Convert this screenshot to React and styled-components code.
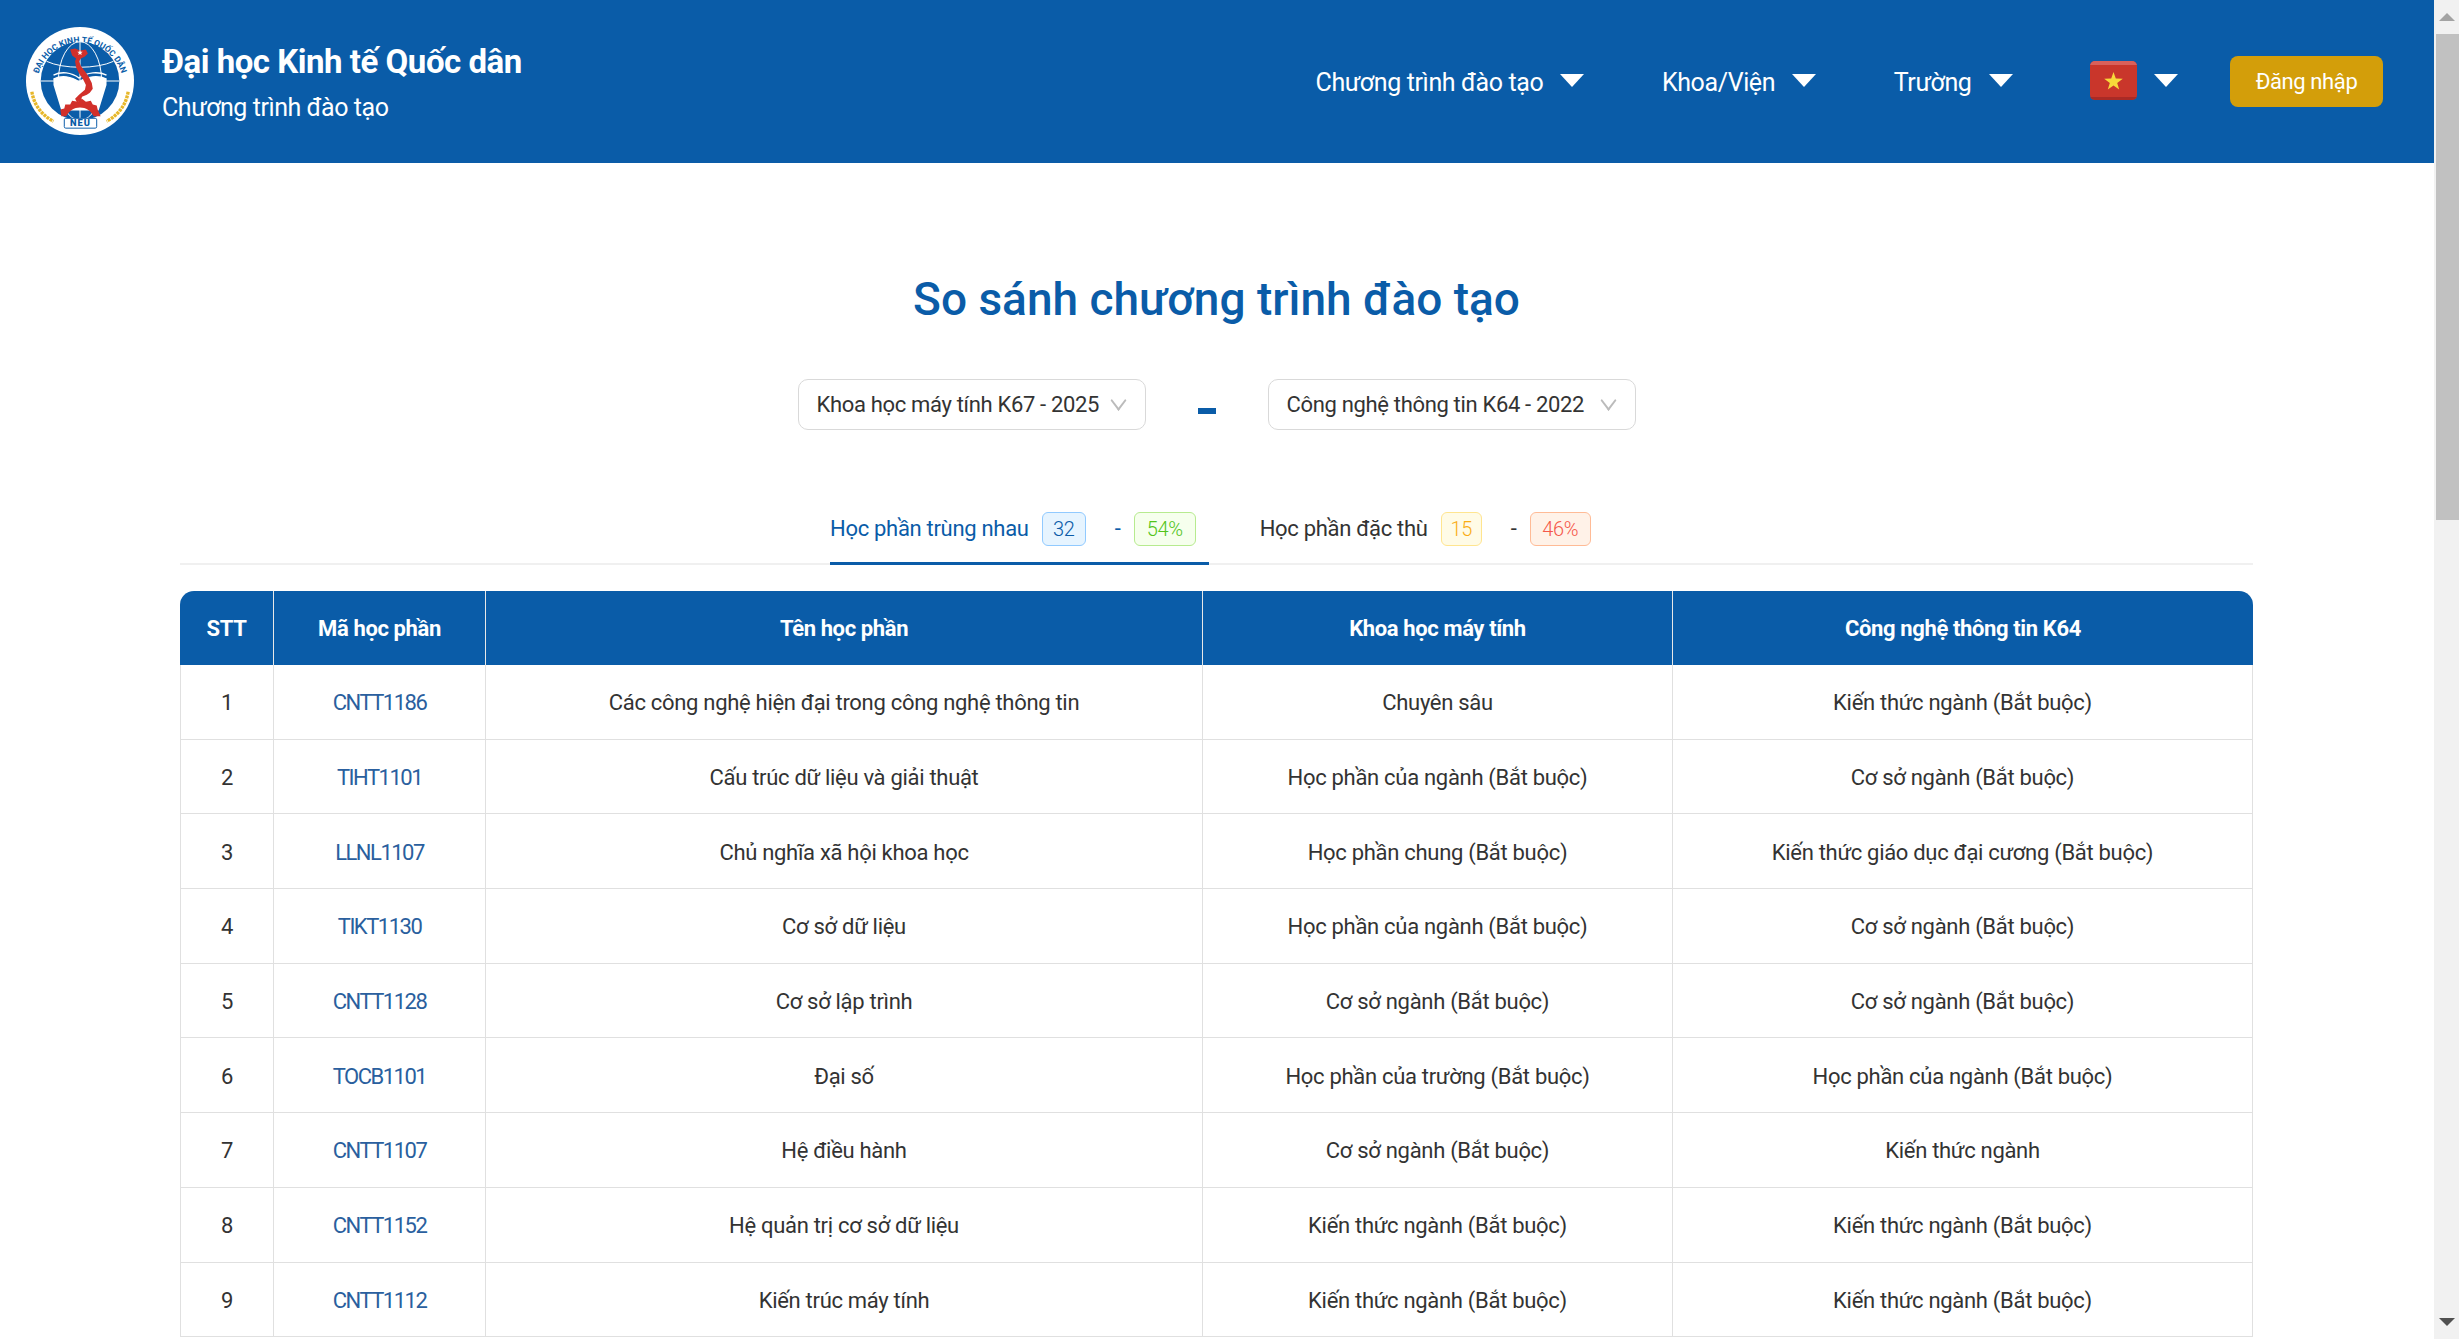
import React from 'react'
import styled, { createGlobalStyle } from 'styled-components'

const GlobalStyle = createGlobalStyle`
  html, body { margin: 0; padding: 0; height: 100%; background: #fff; }
  body { font-family: Roboto, "Liberation Sans", sans-serif; color: #333; }
  * { box-sizing: border-box; }
`

const rows = [
  ['1', 'CNTT1186', 'Các công nghệ hiện đại trong công nghệ thông tin', 'Chuyên sâu', 'Kiến thức ngành (Bắt buộc)'],
  ['2', 'TIHT1101', 'Cấu trúc dữ liệu và giải thuật', 'Học phần của ngành (Bắt buộc)', 'Cơ sở ngành (Bắt buộc)'],
  ['3', 'LLNL1107', 'Chủ nghĩa xã hội khoa học', 'Học phần chung (Bắt buộc)', 'Kiến thức giáo dục đại cương (Bắt buộc)'],
  ['4', 'TIKT1130', 'Cơ sở dữ liệu', 'Học phần của ngành (Bắt buộc)', 'Cơ sở ngành (Bắt buộc)'],
  ['5', 'CNTT1128', 'Cơ sở lập trình', 'Cơ sở ngành (Bắt buộc)', 'Cơ sở ngành (Bắt buộc)'],
  ['6', 'TOCB1101', 'Đại số', 'Học phần của trường (Bắt buộc)', 'Học phần của ngành (Bắt buộc)'],
  ['7', 'CNTT1107', 'Hệ điều hành', 'Cơ sở ngành (Bắt buộc)', 'Kiến thức ngành'],
  ['8', 'CNTT1152', 'Hệ quản trị cơ sở dữ liệu', 'Kiến thức ngành (Bắt buộc)', 'Kiến thức ngành (Bắt buộc)'],
  ['9', 'CNTT1112', 'Kiến trúc máy tính', 'Kiến thức ngành (Bắt buộc)', 'Kiến thức ngành (Bắt buộc)'],
]

const Logo = () => (
  <LogoSvg viewBox="9 12 112 112">
    <defs>
      <path id="logoArc" d="M21 73 A44 44 0 1 1 109 73" />
    </defs>
    <circle cx="65" cy="68" r="55" fill="#fff" />
    <text fontFamily="Roboto, sans-serif" fontSize="8.6" fontWeight="700" fill="#0a5ca8">
      <textPath href="#logoArc" startOffset="50%" textAnchor="middle">ĐẠI HỌC KINH TẾ QUỐC DÂN</textPath>
    </text>
    <circle cx="65" cy="68" r="40" fill="#0a5ca8" />
    <g fill="none" stroke="#fff" strokeWidth="1">
      <ellipse cx="65" cy="68" rx="22" ry="40" />
      <path d="M25 68H105M65 28V108M31 48C48 56 82 56 99 48" />
    </g>
    <path d="M38 66C46 62 56 63 64 69C72 63 84 62 92 66V72L84 98H46L38 72Z" fill="#fff" />
    <path d="M38 62C46 58 56 59 64 65C72 59 84 58 92 62M38 66C46 62 56 63 64 69C72 63 84 62 92 66" fill="none" stroke="#fff" strokeWidth="1.4" />
    <path d="M55 36L60 35L65 37L71 36L73 40L70 43L66 45L64 48L66 53L70 58L74 64L77 70L78 76L75 80L72 82L67 84L66 88L62 90L60 86L64 82L70 77L71 72L68 66L64 60L61 54L60 48L61 45L57 42Z" fill="#d2302a" />
    <path d="M65 36.2l.8 1.9 2 .1-1.6 1.3.5 2-1.7-1.1-1.7 1.1.5-2-1.6-1.3 2-.1z" fill="#fff" />
    <path d="M46 104L45 97L49 96L50 92L55 92L57 88L63 89L67 86L71 89L76 88L78 92L82 93L83 97L86 104H79C76 98 71 95 65 95C59 95 54 98 51 104Z" fill="#d2302a" />
    <g fill="none" stroke="#e7b72a" strokeWidth="3.4" strokeDasharray="3 0.8">
      <path d="M16 79C18 92 26 103 38 109" />
      <path d="M114 79C112 92 104 103 92 109" />
    </g>
    <rect x="49" y="106" width="33" height="10" rx="1.5" fill="#fff" stroke="#0a5ca8" strokeWidth="1" />
    <text x="65.5" y="114.3" textAnchor="middle" fontFamily="Roboto, sans-serif" fontSize="9.5" fontWeight="900" fill="#0a5ca8" letterSpacing="1">NEU</text>
  </LogoSvg>
)

const App = () => {
  return (
    <>
      <GlobalStyle />
      <Page>
        <Main>
          <Header>
            <Logo />
            <Brand>
              <BrandTitle>Đại học Kinh tế Quốc dân</BrandTitle>
              <BrandSub>Chương trình đào tạo</BrandSub>
            </Brand>
            <Nav>
              <NavItem>Chương trình đào tạo<Caret /></NavItem>
              <NavItem>Khoa/Viện<Caret /></NavItem>
              <NavItem>Trường<Caret /></NavItem>
              <NavItem>
                <Flag viewBox="0 0 47 39">
                  <rect width="47" height="39" fill="#c9362b" />
                  <rect width="47" height="4" fill="#d9605a" />
                  <rect y="36" width="47" height="3" fill="#a92a25" />
                  <path d="M23.5 11l2.3 6.6 7 .1-5.6 4.2 2 6.7-5.7-4-5.7 4 2-6.7-5.6-4.2 7-.1z" fill="#f7d93a" />
                </Flag>
                <Caret />
              </NavItem>
            </Nav>
            <LoginButton>Đăng nhập</LoginButton>
          </Header>
          <Content>
            <Title>So sánh chương trình đào tạo</Title>
            <Selectors>
              <SelectBox $width={348}>Khoa học máy tính K67 - 2025<Chevron /></SelectBox>
              <Dash />
              <SelectBox $width={368}>Công nghệ thông tin K64 - 2022<Chevron /></SelectBox>
            </Selectors>
            <Tabs>
              <Tab $active>
                Học phần trùng nhau
                <Badge $tone="blue" $width={44}>32</Badge>
                <TabSep>-</TabSep>
                <Badge $tone="green" $width={62}>54%</Badge>
              </Tab>
              <Tab>
                Học phần đặc thù
                <Badge $tone="gold" $width={41}>15</Badge>
                <TabSep>-</TabSep>
                <Badge $tone="red" $width={61}>46%</Badge>
              </Tab>
            </Tabs>
            <Table>
              <colgroup>
                <col style={{ width: 94 }} />
                <col style={{ width: 212 }} />
                <col style={{ width: 717 }} />
                <col style={{ width: 470 }} />
                <col />
              </colgroup>
              <thead>
                <tr>
                  <Th>STT</Th>
                  <Th>Mã học phần</Th>
                  <Th>Tên học phần</Th>
                  <Th>Khoa học máy tính</Th>
                  <Th>Công nghệ thông tin K64</Th>
                </tr>
              </thead>
              <tbody>
                {rows.map((r) => (
                  <tr key={r[0]}>
                    <Td>{r[0]}</Td>
                    <Td><CodeLink>{r[1]}</CodeLink></Td>
                    <Td>{r[2]}</Td>
                    <Td>{r[3]}</Td>
                    <Td>{r[4]}</Td>
                  </tr>
                ))}
              </tbody>
            </Table>
          </Content>
        </Main>
        <ScrollBar>
          <ScrollBtn><ArrowUp /></ScrollBtn>
          <ScrollThumb />
          <ScrollBtn $end><ArrowDown /></ScrollBtn>
        </ScrollBar>
      </Page>
    </>
  )
}

export default App

const Page = styled.div`
display: flex;
height: 100vh;
overflow: hidden;
`
const Main = styled.div`
flex: 1;
min-width: 0;
overflow: hidden;
`
const Header = styled.div`
height: 163px;
display: flex;
align-items: center;
padding: 0 51px 0 25px;
background: #0a5ca8;
color: #fff;
`
const LogoSvg = styled.svg`
width: 110px;
height: 110px;
margin-top: -1px;
flex-shrink: 0;
`
const Brand = styled.div`
margin-left: 27px;
display: flex;
flex-direction: column;
gap: 12px;
margin-top: 2px;
`
const BrandTitle = styled.div`
font-size: 33px;
font-weight: 700;
line-height: 38px;
letter-spacing: -0.47px;
`
const BrandSub = styled.div`
font-size: 25px;
line-height: 30px;
letter-spacing: -0.45px;
`
const Nav = styled.div`
margin-left: auto;
display: flex;
align-items: center;
gap: 77.5px;
`
const NavItem = styled.div`
display: flex;
align-items: center;
gap: 17px;
font-size: 25px;
line-height: 32px;
letter-spacing: -0.38px;
padding-top: 3px;
`
const Caret = styled.span`
width: 0;
height: 0;
margin-top: -6px;
border-left: 12px solid transparent;
border-right: 12px solid transparent;
border-top: 13px solid #fff;
`
const Flag = styled.svg`
width: 47px;
height: 39px;
border-radius: 5px;
margin-top: -5px;
`
const LoginButton = styled.div`
margin-left: 52px;
width: 153px;
height: 51px;
display: flex;
align-items: center;
justify-content: center;
border-radius: 8px;
background: #d39e0a;
font-size: 22px;
letter-spacing: -0.4px;
`
const Content = styled.div`
width: 2073px;
margin: 0 auto 0 180px;
`
const Title = styled.h1`
margin: 0;
padding-top: 108px;
height: 216px;
text-align: center;
font-size: 46px;
line-height: 56px;
font-weight: 500;
color: #0a5ca8;
letter-spacing: 0;
`
const Selectors = styled.div`
display: flex;
align-items: center;
justify-content: center;
gap: 52px;
`
const SelectBox = styled.div`
width: ${(p) => p.$width}px;
height: 51px;
display: flex;
align-items: center;
justify-content: space-between;
padding: 0 18px;
border: 1px solid #d9d9d9;
border-radius: 10px;
font-size: 22px;
letter-spacing: -0.33px;
color: #333;
`
const Chevron = styled.span`
width: 13px;
height: 13px;
margin: -8px 2px 0 0;
border-right: 2px solid #bbb;
border-bottom: 2px solid #bbb;
transform: rotate(45deg) skew(8deg, 8deg);
`
const Dash = styled.span`
width: 18px;
height: 6px;
margin-top: 12px;
background: #0a5ca8;
`
const Tabs = styled.div`
display: flex;
justify-content: flex-start;
gap: 51px;
margin-top: 62px;
padding-left: 650px;
border-bottom: 2px solid #f0f0f0;
height: 73px;
`
const Tab = styled.div`
height: 73px;
padding-top: 3px;
display: flex;
align-items: center;
font-size: 22px;
letter-spacing: -0.3px;
color: ${(p) => (p.$active ? '#0a5ca8' : '#333')};
border-bottom: 3px solid ${(p) => (p.$active ? '#0a5ca8' : 'transparent')};
padding-right: ${(p) => (p.$active ? '13px' : '0')};
`
const tones = {
  blue: ['#e6f4ff', '#91caff', '#0a5ca8'],
  green: ['#f6ffed', '#b7eb8f', '#52c41a'],
  gold: ['#fffbe6', '#ffe58f', '#faad14'],
  red: ['#fff2e8', '#ffbb96', '#f5584a'],
}
const Badge = styled.span`
width: ${(p) => p.$width}px;
height: 34px;
margin-left: 13px;
display: inline-flex;
align-items: center;
justify-content: center;
border-radius: 6px;
font-size: 20px;
font-weight: 300;
background: ${(p) => tones[p.$tone][0]};
border: 1px solid ${(p) => tones[p.$tone][1]};
color: ${(p) => tones[p.$tone][2]};
`
const TabSep = styled.span`
margin: 0 -2px 0 29px;
width: 8px;
`
const Table = styled.table`
width: 100%;
margin-top: 26px;
table-layout: fixed;
border-collapse: separate;
border-spacing: 0;
font-size: 22px;
letter-spacing: -0.3px;
`
const Th = styled.th`
height: 74px;
padding: 0;
background: #0a5ca8;
color: #fff;
font-size: 22px;
font-weight: 700;
letter-spacing: -0.38px;
border-right: 1px solid #e8e8e8;
&:first-child { border-top-left-radius: 14px; }
&:last-child { border-top-right-radius: 14px; border-right: none; }
`
const Td = styled.td`
height: 74.7px;
padding: 2px 0 0;
text-align: center;
color: #333;
border-right: 1px solid #e0e0e0;
border-bottom: 1px solid #e0e0e0;
&:first-child { border-left: 1px solid #e0e0e0; }
`
const CodeLink = styled.span`
color: #2a5f9e;
letter-spacing: -1.5px;
`
const ScrollBar = styled.div`
width: 25px;
flex-shrink: 0;
display: flex;
flex-direction: column;
background: #f1f1f1;
`
const ScrollBtn = styled.div`
height: 34px;
display: flex;
justify-content: center;
align-items: center;
margin-top: ${(p) => (p.$end ? 'auto' : '0')};
`
const ArrowUp = styled.span`
width: 0;
height: 0;
margin-left: 1px;
border-left: 8px solid transparent;
border-right: 8px solid transparent;
border-bottom: 8px solid #a3a3a3;
`
const ArrowDown = styled.span`
width: 0;
height: 0;
margin-left: 1px;
border-left: 8px solid transparent;
border-right: 8px solid transparent;
border-top: 8px solid #505050;
`
const ScrollThumb = styled.div`
height: 486px;
margin-left: 2px;
background: #c1c1c1;
`
